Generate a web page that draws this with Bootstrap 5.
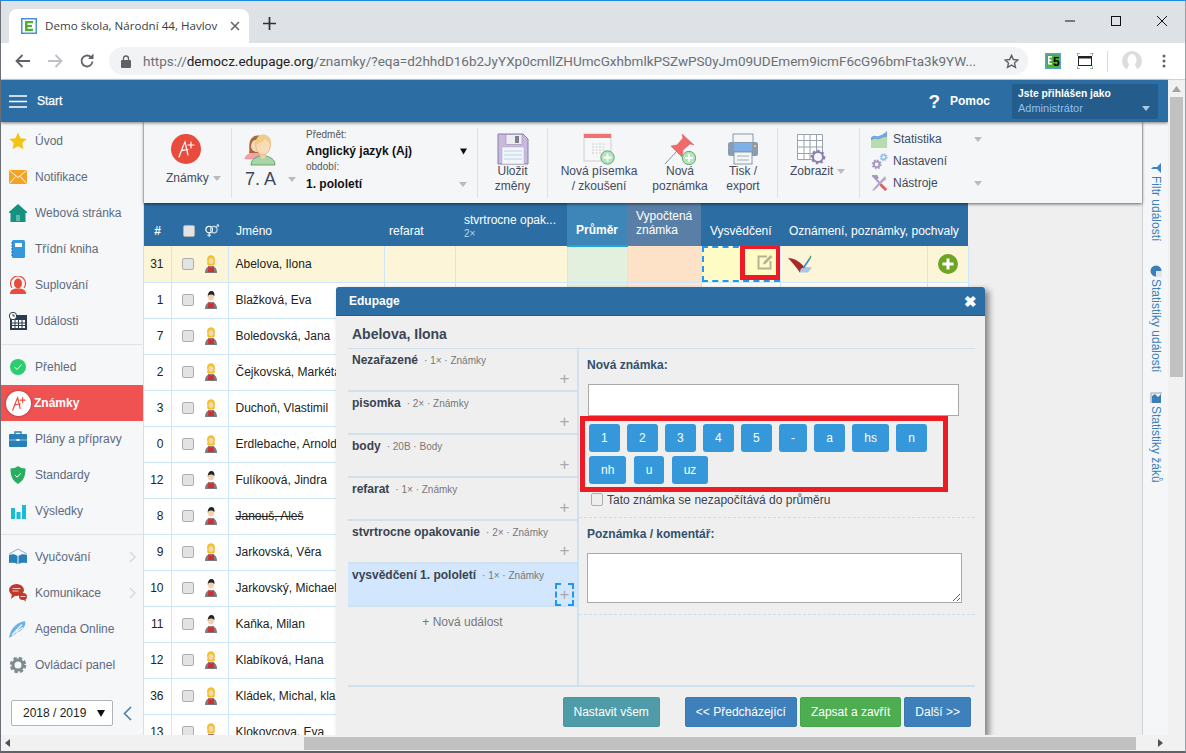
<!DOCTYPE html>
<html lang="cs">
<head>
<meta charset="utf-8">
<title>Edupage - Známky</title>
<link href="https://cdn.jsdelivr.net/npm/bootstrap@5.3.0/dist/css/bootstrap.min.css" rel="stylesheet">
<style>
html,body{height:100%;overflow:hidden}
body{font-family:"Liberation Sans",Arial,sans-serif;font-size:12px;color:#333;background:#efefef;position:relative}
.winframe{height:753px;border-top:1px solid #1a8ae0;border-left:1px solid #6b6f75;border-right:1px solid #9aa0a6;border-bottom:2px solid #5f6368;overflow:hidden}
.no-shrink{min-height:0;min-width:0}
/* browser chrome */
.cr-tabs{height:42px;background:#dee1e6;flex:none}
.cr-tab{width:240px;height:34px;margin:8px 0 0 8px;background:#fff;border-radius:8px 8px 0 0;padding:0 9px 0 12px;font-family:"Open Sans","Liberation Sans",sans-serif;font-size:11.6px;color:#3c4043;white-space:nowrap}
.cr-fav{width:16px;height:16px;flex:none;margin-right:8px}
.cr-tabx{margin-left:auto;flex:none}
.cr-plus{margin-left:14px;flex:none}
.cr-ctrl{margin-left:auto;gap:30px;padding-right:15px}
.cr-bar{height:37px;background:#fff;border-bottom:1px solid #d0d2d5;flex:none;padding-left:6px}
.cr-navic{width:32px;flex:none;display:flex;justify-content:center}
.cr-addr{width:919px;height:28px;margin-left:6px;border-radius:14px;background:#f1f3f4;padding:0 9px 0 12px;flex:none}
.cr-url{font-family:Roboto,"Liberation Sans",sans-serif;font-size:13.5px;color:#6c7075;white-space:nowrap;margin-left:12px}
.cr-url b{font-weight:400;color:#202124}
.cr-star{margin-left:auto;flex:none}
.cr-ext{margin-left:17px}
.cr-full{margin-left:16px}
.cr-sepv{width:1px;height:21px;background:#d8dadd;margin:0 14px}
.cr-menu{margin-left:20px}
/* header */
.hd-bar{height:42px;background:#2c6ea4;color:#fff;flex:none;padding-left:8px;box-shadow:0 1px 3px rgba(0,0,0,.5);z-index:3;position:relative}
.hd-start{font-size:12px;margin-left:10px;-webkit-text-stroke:.25px #fff}
.hd-q{font-size:19px;font-weight:700;margin-left:auto;line-height:1}
.hd-help{font-weight:700;margin:0 22px 0 10px}
.hd-user{width:146px;height:35px;background:#245c8c;border-radius:2px;margin-right:10px;padding:3px 6px;line-height:14px;position:relative}
.hd-user strong{font-size:10.3px;display:block}
.hd-user span{font-size:11px;color:#8fc0ec}
.hd-user i{position:absolute;right:8px;bottom:8px}
/* shared caret */
.tcaret{display:inline-block;width:0;height:0;border-left:4.5px solid transparent;border-right:4.5px solid transparent;border-top:5px solid #b9bbbe}
.hd-user .tcaret{border-top-color:#a9c9e4}
/* sidebar */
.sd-col{width:143px;flex:none;background:#f6f7f9;border-right:1px solid #dcdfe2;padding-top:1px}
.sd-item{height:36px;padding-left:8px;color:#5e6a80;position:relative;white-space:nowrap}
.sd-ic{width:18px;height:18px;flex:none;margin-right:8px}
.sd-item.is-on{background:#f05252;color:#fff;font-weight:700;padding-left:5px}
.sd-dot{width:25px;height:25px;border-radius:50%;background:#fff;flex:none;margin-right:3px;box-shadow:0 0 3px rgba(0,0,0,.35)}
.sd-rule{height:1px;background:#e0e2e5;margin:5px 0 4px}
.sd-chev{position:absolute;left:128px;top:12px}
.sd-foot{padding:17px 0 0 10px;gap:10px}
.yearsel{width:102px;height:26px;border-radius:2px;border:1px solid #b3b3b3;padding:0 0 0 11px;font-size:12px;color:#222;font-family:inherit;background-color:#fff;background-image:url("data:image/svg+xml,%3Csvg xmlns='http://www.w3.org/2000/svg' width='8' height='7'%3E%3Cpath d='M0 0h8L4 7z' fill='%23111'/%3E%3C/svg%3E");background-size:8px 7px;background-position:right 7px center}
/* toolbar */
.tb-wrap{height:81px;background:#f5f6f8;flex:none;box-shadow:0 1px 3px rgba(0,0,0,.6);position:relative;z-index:2;color:#3f4b5e}
.tb-grp{height:70px;margin-top:6px;border-right:1px solid #dfe1e4;flex:none}
.tb-btn{text-align:center;line-height:15px;padding-top:5px}
.tb-ic{width:32px;height:32px;display:block;margin:0 auto -1px}
.tb-g1{width:88px}.tb-g2{width:246px}.tb-g3{width:70px}.tb-g4{width:230px}.tb-g5{width:82px}
.tb-i1{width:102px}.tb-i2{width:60px}.tb-i3{width:66px}
.tb-aplus{width:30px;height:30px;margin:1px 0 7px 27px;display:block}
.tb-lab1{padding-left:22px;gap:4px}
.tb-lab5{padding-left:12px;gap:4px}
.tb-grid{width:30px;margin-left:18px}
.tb-pcol{width:74px;padding:4px 0 0 12px}
.tb-scol{padding-right:10px}
.tb-sub{font-size:10px;line-height:14px;color:#555}
.tb-strong{font-weight:700;color:#111;line-height:18px}
.tb-strong2{line-height:20px}
.tb-cls{font-size:18px;line-height:22px;color:#3c4859;gap:12px;margin:2px 0 0 1px;white-space:nowrap}
.tb-list{padding:6px 0 0 11px}
.tb-row{height:22px;width:111px}
.tb-row svg{margin-right:5px;flex:none}
.tb-row .tcaret{margin-left:auto}
/* grid */
.gr-area{flex:1 1 0;min-height:0;overflow:hidden;background:#efefef}
.gradetbl{width:824px;table-layout:fixed;margin:0;font-size:12px;border-collapse:collapse}
.cw1{width:27px}.cw2{width:57px}.cw3{width:156px}.cw4{width:71px}.cw5{width:112px}.cw6{width:60px}.cw7{width:74px}.cw8{width:79px}.cw9{width:147px}.cw10{width:41px}
.gradetbl th{background:#2c6ea4;color:#fff;font-weight:400;height:43px;padding:12px 0 0 8px;border:0;vertical-align:middle;line-height:14px;white-space:nowrap;overflow:hidden}
.gradetbl td{height:36px;padding:0 0 0 7px;border:1px solid #cfe7fa;border-width:0 1px 1px 0;background:#fff;vertical-align:middle;color:#222;white-space:nowrap;overflow:hidden}
.gradetbl tr.is-sel td{background:#fdf5d8}
.gradetbl td.c-num{text-align:right;padding:0 7px 0 0}
.gradetbl td.c-avg{background:#eaf3e6}
.gradetbl td.c-calc{background:#fdeadb}
.gradetbl tr.is-sel td.c-avg{background:#e2f0dd}
.gradetbl tr.is-sel td.c-calc{background:#fde2c8}
.gradetbl th.h-avg{background:#3f86b8;border-bottom:2px solid #1fa8cf;font-weight:700;padding:12px 0 0;text-align:center}
.gradetbl th.h-calc{background:#5a7fa6;padding:0 0 4px 9px}
.gradetbl th.h-num{padding:12px 0 0;font-weight:700;text-align:center}
.gradetbl th.h-chk{padding:12px 0 0 12px}
.gradetbl th.h-ref{padding-left:5px}
.gradetbl th.h-two{padding:3px 0 0 9px}
.gradetbl th.h-cert{padding-left:9px}
.gradetbl th.h-wide{padding-left:9px;overflow:visible}
.h-flex{gap:9px}
.h-sm{font-size:10px;color:#b9d4ea;display:block;line-height:13px}
.chk-box{width:12px;height:12px;background:#e3e3e3;border:1px solid #aeaeae;border-radius:2px;display:inline-block;flex:none}
.td-flex{gap:9px;padding-left:3px}
.gr-cert{position:relative;padding:0!important;background:#fefbc4!important}
.gr-dash{position:absolute;left:0;right:0;top:0;bottom:0;border:2px dashed #2196f3}
.gr-redbox{position:absolute;left:38px;top:-2px;width:41px;height:36px;border:5px solid #ed1c24;display:flex;align-items:center;justify-content:center;padding-left:9px}
.gradetbl td.c-addcell{padding:0 0 0 10px}
/* rail + scrollbars */
.rl-col{width:26px;flex:none;background:#f5f6f8;border-left:1px solid #cfd2d5;padding-top:40px;gap:19px;color:#3a7fb8;align-items:center}
.rl-link{writing-mode:vertical-rl;font-size:12px;line-height:14px;display:flex;align-items:center;gap:2px;white-space:nowrap}
.rl-second{margin-top:5px}
.vs-bar{width:17px;flex:none;background:#f1f1f1;padding:0 2px;position:relative;z-index:4}
.vs-up{height:17px;display:flex;align-items:center;justify-content:center}
.vs-thumb{height:280px;background:#c1c1c1}
.hs-bar{height:16px;flex:none;background:#f1f1f1;position:relative;z-index:6;padding-left:4px}
.hs-thumb{width:832px;height:13px;background:#c1c1c1;margin-left:293px}
.hs-right{margin:0 5px 0 auto}
/* dialog */
.dlg-box{position:absolute;left:336px;top:287px;width:649px;height:449px;background:#efefef;border-radius:3px 3px 0 0;box-shadow:4px 3px 6px rgba(0,0,0,.45);z-index:5;display:flex;flex-direction:column}
.dlg-head{height:29px;background:#2c6ea4;color:#fff;font-weight:700;padding:0 8px 0 13px;border-radius:3px 3px 0 0;border-bottom:1px solid #245c8c;flex:none}
.dlg-x{margin-left:auto;font-size:15px;line-height:1}
.dlg-name{height:33px;margin:0 10px 0 12px;padding:5px 0 0 4px;font-size:14px;font-weight:700;color:#3a4656;border-bottom:1px solid #cfe0ef;flex:none}
.dlg-main{margin:0 10px 0 12px;height:338px;border-bottom:2px solid #cfe0ef;flex:none}
.ev-col{width:231px;flex:none;border-right:2px solid #cfe0ef}
.ev-item{height:43px;border-bottom:2px solid #cfe0ef;padding:2px 3px 0 4px;position:relative}
.ev-item.is-on{background:#d2e7fd}
.ev-name{font-weight:700;color:#3a4350;line-height:14px}
.ev-meta{font-size:10px;color:#777;margin-left:6px}
.ev-plus{position:absolute;right:3px;bottom:-1px;width:19px;height:23px;color:#aaa;font-size:17px;line-height:21px;text-align:center}
.ev-item.is-on .ev-plus{border:2px dashed #2196f3;line-height:19px}
.ev-new{text-align:center;color:#777;padding-top:6px}
.nw-col{flex:1 1 0;min-width:0}
.nw-lbl{font-weight:700;color:#31506e;height:35px;padding:7px 0 0 8px}
.nw-input{width:371px;height:32px;display:block;margin-left:9px;background:#fff;border:1px solid #a9a9a9}
.grade-box{width:368px;border:5px solid #ed1c24;margin-left:1px;padding:3px 4px;gap:4px 7.3px;align-content:flex-start}
.btn.grade-btn{--bs-btn-padding-x:12px;--bs-btn-padding-y:0;--bs-btn-font-size:12px;--bs-btn-bg:#3498db;--bs-btn-border-color:#3498db;--bs-btn-color:#fff;--bs-btn-hover-bg:#3498db;--bs-btn-hover-color:#fff;--bs-btn-border-radius:3px;--bs-btn-border-width:0;height:28px;line-height:28px}
.nw-check{height:26px;padding:0 0 10px 12px;gap:4px;color:#3a4350;border-bottom:1px dashed #c6dff3}
.nw-check .chk-box{background:#eee;width:12px;height:13px}
.nw-note{height:35px;padding:7px 0 0 8px;font-weight:700;color:#31506e}
.nw-ta{width:375px;height:50px;display:block;margin-left:8px;background:#fff;border:1px solid #a9a9a9;border-radius:0;padding:0}
.nw-dash{margin-top:11px;border-bottom:1px dashed #c6dff3}
.dlg-foot{height:47px;padding:10px 14px 0 0;gap:3px;justify-content:flex-end;align-items:flex-start}
.btn.ft-btn{--bs-btn-padding-x:10px;--bs-btn-padding-y:0;--bs-btn-font-size:12px;--bs-btn-color:#fff;--bs-btn-border-radius:2px;--bs-btn-hover-color:#fff;height:30px;line-height:28px}
.ft-teal{--bs-btn-bg:#4f9ca8;--bs-btn-border-color:#4a95a0;--bs-btn-hover-bg:#4f9ca8;margin-right:22px}
.ft-blue{--bs-btn-bg:#3d80bc;--bs-btn-border-color:#3a7ab3;--bs-btn-hover-bg:#3d80bc}
.ft-green{--bs-btn-bg:#4cae50;--bs-btn-border-color:#48a54c;--bs-btn-hover-bg:#4cae50}
</style>
</head>
<body>
<svg width="0" height="0" class="position-absolute">
<defs>
<symbol id="i-aplus" viewBox="0 0 30 30"><circle cx="15" cy="15" r="15" fill="#e94b3c"/><path d="M8 23c2-5 4-11 6-15 1 4 2 9 3 13M10 17c2-1 5-1 7-1.500M20 8v6M17 11h6" fill="none" stroke="#fff" stroke-width="1.200" stroke-linecap="round"/></symbol>
<symbol id="i-aplus-r" viewBox="0 0 30 30"><path d="M8 23c2-5 4-11 6-15 1 4 2 9 3 13M10 17c2-1 5-1 7-1.500M20 8v6M17 11h6" fill="none" stroke="#e94b3c" stroke-width="1.400" stroke-linecap="round"/></symbol>
<symbol id="i-star" viewBox="0 0 18 18"><path d="M9 .5l2.600 5.700 6.200.7-4.600 4.200 1.300 6.100L9 14.200l-5.500 3 1.300-6.100L.2 6.900l6.200-.7z" fill="#f4c414"/></symbol>
<symbol id="i-mail" viewBox="0 0 18 15"><rect width="18" height="14" y=".5" fill="#f5a326"/><path d="M.5 1l8.500 7 8.500-7M.5 14l6-7M17.500 14l-6-7" fill="none" stroke="#fff" stroke-width="1"/></symbol>
<symbol id="i-home" viewBox="0 0 18 18"><path d="M9 0l9 8v1h-1.500v9h-15V9H0V8z" fill="#14917f"/><rect x="7" y="11" width="4" height="6" fill="#5cb8ab"/></symbol>
<symbol id="i-book" viewBox="0 0 18 18"><rect x="3" y="0" width="13" height="18" rx="1.500" fill="#3498db"/><rect x="6" y="3" width="7" height="4" fill="#fff"/><path d="M2 3h2M2 6h2M2 9h2M2 12h2M2 15h2" stroke="#1f6da8"/></symbol>
<symbol id="i-sub" viewBox="0 0 18 18"><path d="M3 12a7.500 7.500 0 1 1 12 0" fill="none" stroke="#e94b3c" stroke-width="1.200"/><ellipse cx="9" cy="7.500" rx="4" ry="5" fill="#e94b3c"/><path d="M1 18c0-4 3-5.500 8-5.500s8 1.500 8 5.500z" fill="#e94b3c"/></symbol>
<symbol id="i-cal" viewBox="0 0 18 18"><rect x="1" y="3" width="17" height="15" fill="#2b3c50"/><rect x="3" y="8" width="13" height="8" fill="#fff"/><path d="M6 8v8M9.500 8v8M13 8v8M3 11h13M3 13.500h13" stroke="#2b3c50" stroke-width="1"/><circle cx="4" cy="4" r="3.700" fill="#fff" stroke="#2b3c50"/><path d="M4 2v2h2" stroke="#2b3c50" fill="none"/></symbol>
<symbol id="i-ok" viewBox="0 0 18 18"><circle cx="9" cy="9" r="8" fill="#2ecc71"/><path d="M5.500 9l2.500 2.500 4.500-5" fill="none" stroke="#fff" stroke-width="1"/></symbol>
<symbol id="i-case" viewBox="0 0 18 18"><path d="M6 4V2h6v2" fill="none" stroke="#2980b9" stroke-width="1.300"/><rect y="4" width="18" height="13" rx="1" fill="#2980b9"/><path d="M0 10h18" stroke="#8ec4ea"/><rect x="7.500" y="9" width="3" height="2" fill="#fff"/></symbol>
<symbol id="i-shield" viewBox="0 0 18 18"><path d="M9 0c2.500 1.800 5 2.500 7.500 2.500 0 7-1.500 12-7.500 15.500C3 14.500 1.500 9.500 1.500 2.500 4 2.500 6.500 1.800 9 0z" fill="#27ae60"/><path d="M6 9l2.200 2.200L12 7" fill="none" stroke="#fff" stroke-width="1"/></symbol>
<symbol id="i-bars" viewBox="0 0 18 18"><path d="M2 6h4v11H2zM7.500 10h4v7h-4zM13 3h4v14h-4z" fill="#18bcd6"/></symbol>
<symbol id="i-learn" viewBox="0 0 18 18"><path d="M0 6l9-5 9 5" fill="none" stroke="#7fb3d9" stroke-width="1"/><path d="M0 7c3-1 6-1 8.500 1v8C6 14.500 3 14.500 0 15zM18 7c-3-1-6-1-8.500 1v8c2.500-1.500 5.500-1.500 8.500-1z" fill="#2a7fb8"/></symbol>
<symbol id="i-chat" viewBox="0 0 18 18"><ellipse cx="14" cy="12.500" rx="4" ry="3.500" fill="#c0392b"/><path d="M14 15l3 3-1-4z" fill="#c0392b"/><ellipse cx="7.500" cy="6" rx="7.500" ry="6" fill="#c0392b"/><path d="M3 10l-1 5 5-4z" fill="#c0392b"/><path d="M3.500 4.500h8M3.500 7h6" stroke="#f4c7c1"/><path d="M11.500 12.500h5" stroke="#f4c7c1"/></symbol>
<symbol id="i-pen" viewBox="0 0 18 18"><path d="M0 18C1 11 5 3 16 1c1.500 5-3 10-8 11.500C5 14.500 3 16.500 0 18z" fill="#6db3e8"/><path d="M3 15L13 4.500M6.500 12.500l7.500-5" stroke="#f6f7f9" stroke-width="1.200" fill="none"/></symbol>
<symbol id="i-gear" viewBox="0 0 18 18"><circle cx="9" cy="9" r="6.500" fill="none" stroke="#7f8c8d" stroke-width="3.500" stroke-dasharray="3.100 2"/><circle cx="9" cy="9" r="5" fill="none" stroke="#7f8c8d" stroke-width="3"/></symbol>
<symbol id="i-people" viewBox="0 0 32 34"><path d="M13 20c-3 0-12 2-12 7h17v-7z" fill="#f3a0aa" stroke="#d87f8c" stroke-width=".5"/><path d="M5 21c1-3-1-12 3-15 3-4 11-3 12 2l-4 13z" fill="#a9663c"/><path d="M7 15c0-5 3-8 7-7v12c-3 0-6-1-7-5z" fill="#fcd9b6"/><path d="M7 33c0-6 5-8 9-9h6c4 1 9 3 9 9z" fill="#a9d5a5" stroke="#4e9a58" stroke-width=".8"/><path d="M16 24c1 2 2 3 3 3s2-1 3-3v-4h-6z" fill="#f8cfa6"/><path d="M12 16c-1-7 1-13 7-13s9 5 7 13c-1 4-4 7-7 7s-6-3-7-7z" fill="#fbdcb8" stroke="#e0b073" stroke-width=".8"/><path d="M12 13c0-6 2-10 7-10s8 4 7 10c-2-3-3-5-5-6-1 3-6 4-9 6z" fill="#efcd87"/></symbol>
<symbol id="i-floppy" viewBox="0 0 32 32"><path d="M1 1h25l5 5v25H1z" fill="#c8b9dd" stroke="#8e7dab"/><rect x="9" y="1.500" width="16" height="10" fill="#ececf1" stroke="#8e7dab" stroke-width=".5"/><rect x="18" y="3" width="4" height="7" fill="#7a7f8a"/><rect x="5" y="14" width="22" height="17" fill="#f2f5f9" stroke="#a5b4c6" stroke-width=".5"/><path d="M7 18h18M7 22h18M7 26h18" stroke="#b6d2e8"/></symbol>
<symbol id="i-exam" viewBox="0 0 32 32"><rect x="1" y="1" width="27" height="27" fill="#f7f7f7" stroke="#cfcfcf"/><rect x="1" y="1" width="27" height="4" fill="#ef7373"/><path d="M9 11h14M9 14h14M9 17h14M9 20h14" stroke="#c8ccd0" stroke-dasharray="2 1.500"/><circle cx="24.500" cy="24.500" r="6.700" fill="#b5e3bd" stroke="#5fae72"/><path d="M24.500 20.500v8M20.500 24.500h8" stroke="#fff" stroke-width="1.800"/></symbol>
<symbol id="i-pin" viewBox="0 0 32 32"><path d="M1 31L13 18" stroke="#7d93b0"/><path d="M7 13l6-1 6-7-1-4 12 11-4-1-7 6-1 7z" fill="#ef6b6b" stroke="#d64d4d" stroke-width=".5"/><circle cx="25" cy="25" r="6.700" fill="#b5e3bd" stroke="#5fae72"/><path d="M25 21v8M21 25h8" stroke="#fff" stroke-width="1.800"/></symbol>
<symbol id="i-print" viewBox="0 0 32 32"><rect x="6" y="1" width="20" height="10" fill="#f4f5f7" stroke="#8a96a5"/><rect x="1" y="9" width="30" height="14" rx="2.500" fill="#8b9bb0"/><rect x="7" y="10" width="18" height="8" fill="#7eb0e8"/><rect x="27" y="12" width="2" height="2" fill="#f4d03f"/><rect x="7" y="19" width="18" height="12" fill="#f4f5f7" stroke="#8a96a5"/><path d="M10 23h12M10 27h12" stroke="#a4aeba"/></symbol>
<symbol id="i-grid" viewBox="0 0 30 32"><path d="M1.500 1.500h25v25h-25zM1.500 7.500h25M1.500 14h25M1.500 20.500h25M8 1.500v25M14 1.500v25M20.500 1.500v25" fill="#fff" stroke="#9aa3ad"/><circle cx="22" cy="24" r="5" fill="#f5f6f8" stroke="#8e7dab" stroke-width="2"/><circle cx="22" cy="24" r="6.300" fill="none" stroke="#8e7dab" stroke-width="2" stroke-dasharray="2.400 2.300"/></symbol>
<symbol id="i-stat" viewBox="0 0 18 18"><path d="M0 7c4-4 5 0 9-2 3-1 5-2 8-5v11H0z" fill="#6fa8dc"/><path d="M0 10c4-3 8 0 10-2 3-2 5-1 7-2v12H0z" fill="#b7dcae"/></symbol>
<symbol id="i-set" viewBox="0 0 18 18"><circle cx="6" cy="12" r="3" fill="none" stroke="#a796c2" stroke-width="2"/><circle cx="6" cy="12" r="4.500" fill="none" stroke="#a796c2" stroke-width="1.500" stroke-dasharray="1.800 1.700"/><circle cx="13.500" cy="4.500" r="2.300" fill="none" stroke="#8dbfe6" stroke-width="1.500"/><circle cx="13.500" cy="4.500" r="3.600" fill="none" stroke="#8dbfe6" stroke-width="1.200" stroke-dasharray="1.500 1.300"/></symbol>
<symbol id="i-tools" viewBox="0 0 18 18"><path d="M2 1l3 3 2-1-1-2c-2-1-4-1-4 0zM3 2L16 16" stroke="#a796c2" stroke-width="2" fill="#a796c2"/><path d="M15 1l-4 4-8 9-2 3 3-1 9-9 4-3-1 1z" fill="#b6a8cd"/><path d="M10 10l6 6" stroke="#e85c5c" stroke-width="3"/></symbol>
<symbol id="i-f" viewBox="0 0 16 18"><path d="M2 18c0-4 2-7 6-7s6 3 6 7z" fill="#7b7b7b"/><path d="M5.500 10.500L8 13l2.500-2.500.5 6.500H5z" fill="#d22e35"/><ellipse cx="8" cy="4.800" rx="4" ry="4.600" fill="#efc327"/><path d="M4 9c0-1 .5-2 1.500-2.500h5C11.500 7 12 8 12 9l-1.500 1.500h-5z" fill="#efc327"/><ellipse cx="8" cy="6" rx="2.400" ry="3" fill="#f9d5b0"/></symbol>
<symbol id="i-m" viewBox="0 0 16 18"><path d="M2 18c0-4 2-7 6-7s6 3 6 7z" fill="#7b7b7b"/><path d="M5.500 10.500L8 13l2.500-2.500.5 6.500H5z" fill="#d22e35"/><ellipse cx="8" cy="5.800" rx="3" ry="3.800" fill="#f5cfae"/><path d="M4.700 5.500c0-3.500 1.600-5.500 3.800-5.500s3.200 2 3 5c-1-1.500-4-2-6-1-.2 1-.5 1.500-.8 1.500z" fill="#222"/></symbol>
<symbol id="i-mem" viewBox="0 0 16 16"><circle cx="5.500" cy="7" r="3.500" fill="none" stroke="#fff" stroke-width="1.300"/><circle cx="10.500" cy="7" r="3.500" fill="none" stroke="#b9d7f0" stroke-width="1.300"/><path d="M5.500 10.500V15M3.500 13h4M13 4.500l2-2M13.500 2h2v2" fill="none" stroke="#fff" stroke-width="1"/></symbol>
<symbol id="i-edit" viewBox="0 0 16 16"><path d="M10 2.500H1.500v12h12V7" fill="none" stroke="#b5b29a" stroke-width="2"/><path d="M6 10.500l.7-2.800L13.500 1l2 2-6.800 6.800z" fill="#b5b29a"/></symbol>
<symbol id="i-note" viewBox="0 0 26 18"><path d="M11 17.500l2.500-6 10.500 1-4 5z" fill="#a9c5e8"/><path d="M0 3c6 0 13 4 17 10-3-1-5 1-5 4.500C8 12 4 7 0 3z" fill="#a52a2a"/><path d="M15 12l6-9 1.500 1-6 9z" fill="#4a90c8"/><path d="M21 3l1.500-2.500 1 .8L22.500 4z" fill="#55a35a"/></symbol>
<symbol id="i-add" viewBox="0 0 20 20"><circle cx="10" cy="10" r="10" fill="#6ea324"/><path d="M10 4.500v11M4.500 10h11" stroke="#fff" stroke-width="3"/></symbol>
<symbol id="i-chev" viewBox="0 0 7 12"><path d="M1 1l5 5-5 5" fill="none" stroke="#d4d6d9" stroke-width="1.300"/></symbol>
</defs>
</svg>

<div class="winframe d-flex flex-column">
  <div class="cr-tabs d-flex align-items-start">
    <div class="cr-tab d-flex align-items-center">
      <svg class="cr-fav" viewBox="0 0 16 16"><rect width="16" height="16" fill="#4a90d9"/><rect x="1.500" y="1.500" width="13" height="13" fill="#fff"/><path d="M4 3h8v2.300H6.500v1.600H11v2.200H6.500v1.600H12V13H4z" fill="#4cb02e"/></svg>
      <span>Demo škola, Národní 44, Havlov</span>
      <svg class="cr-tabx" width="10" height="10" viewBox="0 0 10 10"><path d="M1 1l8 8M9 1l-8 8" stroke="#5f6368" stroke-width="1.500"/></svg>
    </div>
    <svg class="cr-plus mt-3" width="13" height="13" viewBox="0 0 13 13"><path d="M6.500 0v13M0 6.500h13" stroke="#303134" stroke-width="1.700"/></svg>
    <div class="cr-ctrl d-flex mt-2 pt-1 align-items-center">
      <svg width="16" height="16" viewBox="0 0 16 16"><path d="M3 8h10" stroke="#111"/></svg>
      <svg width="16" height="16" viewBox="0 0 16 16"><rect x="3.500" y="3.500" width="9" height="9" fill="none" stroke="#111"/></svg>
      <svg width="16" height="16" viewBox="0 0 16 16"><path d="M3 3l10 10M13 3L3 13" stroke="#111"/></svg>
    </div>
  </div>
  <div class="cr-bar d-flex align-items-center">
    <span class="cr-navic"><svg width="16" height="14" viewBox="0 0 16 14"><path d="M15 7H2M7.500 1L1.500 7l6 6" fill="none" stroke="#5f6368" stroke-width="1.800"/></svg></span>
    <span class="cr-navic"><svg width="16" height="14" viewBox="0 0 16 14"><path d="M1 7h13M8.500 1l6 6-6 6" fill="none" stroke="#bdc1c6" stroke-width="1.800"/></svg></span>
    <span class="cr-navic"><svg width="16" height="16" viewBox="0 0 16 16"><path d="M13.500 8.500A5.500 5.500 0 1 1 11.800 4" fill="none" stroke="#5f6368" stroke-width="1.800"/><path d="M9 6h5.500V.500z" fill="#5f6368"/></svg></span>
    <div class="cr-addr d-flex align-items-center">
      <svg width="10" height="13" viewBox="0 0 10 13"><rect y="5" width="10" height="8" rx="1" fill="#5f6368"/><path d="M2.500 5V3.500a2.500 2.500 0 0 1 5 0V5" fill="none" stroke="#5f6368" stroke-width="1.300"/></svg>
      <span class="cr-url">https://<b>democz.edupage.org</b>/znamky/?eqa=d2hhdD16b2JyYXp0cmllZHUmcGxhbmlkPSZwPS0yJm09UDEmem9icmF6cG96bmFta3k9YW...</span>
      <svg class="cr-star" width="15" height="15" viewBox="0 0 16 16"><path d="M8 1.500l2 4.400 4.800.5-3.600 3.200 1 4.700L8 11.900l-4.200 2.400 1-4.700L1.200 6.400 6 5.900z" fill="none" stroke="#5f6368" stroke-width="1.500"/></svg>
    </div>
    <div class="cr-ext d-flex align-items-center">
      <svg width="16" height="16" viewBox="0 0 16 16"><rect width="16" height="16" fill="#5aa0dc"/><rect x="1.500" y="1.500" width="13" height="13" fill="#4cb02e"/><text x="8" y="13" font-size="12" font-weight="700" font-family="Liberation Sans" fill="#000">5</text><path d="M3 3h4v1.500H4.500v2H6.500V8H4.500v2H7v1.500H3z" fill="#fff"/></svg>
      <svg class="cr-full" width="16" height="16" viewBox="0 0 16 16"><rect x="1.500" y="3.500" width="13" height="9" fill="none" stroke="#222"/><path d="M1.500 3.500h13v2h-13z" fill="#222"/><path d="M0 3V0h3M13 0h3v3M0 13v3h3M13 16h3v-3" fill="none" stroke="#2b8a3e"/></svg>
      <span class="cr-sepv"></span>
      <svg width="20" height="20" viewBox="0 0 20 20"><circle cx="10" cy="10" r="10" fill="#dcdcdc"/><ellipse cx="10" cy="9" rx="4.500" ry="6" fill="#fff"/><path d="M5 20c0-4 2-7 5-7s5 3 5 7z" fill="#fff"/></svg>
      <svg class="cr-menu" width="4" height="14" viewBox="0 0 4 14"><circle cx="2" cy="2" r="1.500" fill="#5f6368"/><circle cx="2" cy="7" r="1.500" fill="#5f6368"/><circle cx="2" cy="12" r="1.500" fill="#5f6368"/></svg>
    </div>
  </div>

  <div class="d-flex flex-grow-1 no-shrink">
    <div class="d-flex flex-column flex-grow-1 no-shrink">
      <div class="hd-bar d-flex align-items-center">
        <svg width="18" height="13" viewBox="0 0 18 13"><path d="M0 1h18M0 6.500h18M0 12h18" stroke="#fff" stroke-width="1.500"/></svg>
        <span class="hd-start">Start</span>
        <span class="hd-q">?</span>
        <span class="hd-help">Pomoc</span>
        <div class="hd-user"><strong>Jste přihlášen jako</strong><span>Administrátor</span><i class="tcaret"></i></div>
      </div>

      <div class="d-flex flex-grow-1 no-shrink">
        <aside class="sd-col">
          <div class="sd-item d-flex align-items-center"><svg class="sd-ic"><use href="#i-star"/></svg>Úvod</div>
          <div class="sd-item d-flex align-items-center"><svg class="sd-ic"><use href="#i-mail"/></svg>Notifikace</div>
          <div class="sd-item d-flex align-items-center"><svg class="sd-ic"><use href="#i-home"/></svg>Webová stránka</div>
          <div class="sd-item d-flex align-items-center"><svg class="sd-ic"><use href="#i-book"/></svg>Třídní kniha</div>
          <div class="sd-item d-flex align-items-center"><svg class="sd-ic"><use href="#i-sub"/></svg>Suplování</div>
          <div class="sd-item d-flex align-items-center"><svg class="sd-ic"><use href="#i-cal"/></svg>Události</div>
          <div class="sd-rule"></div>
          <div class="sd-item d-flex align-items-center"><svg class="sd-ic"><use href="#i-ok"/></svg>Přehled</div>
          <div class="sd-item is-on d-flex align-items-center"><svg class="sd-dot"><use href="#i-aplus-r"/></svg>Známky</div>
          <div class="sd-item d-flex align-items-center"><svg class="sd-ic"><use href="#i-case"/></svg>Plány a přípravy</div>
          <div class="sd-item d-flex align-items-center"><svg class="sd-ic"><use href="#i-shield"/></svg>Standardy</div>
          <div class="sd-item d-flex align-items-center"><svg class="sd-ic"><use href="#i-bars"/></svg>Výsledky</div>
          <div class="sd-rule"></div>
          <div class="sd-item d-flex align-items-center"><svg class="sd-ic"><use href="#i-learn"/></svg>Vyučování<svg class="sd-chev" width="7" height="12"><use href="#i-chev"/></svg></div>
          <div class="sd-item d-flex align-items-center"><svg class="sd-ic"><use href="#i-chat"/></svg>Komunikace<svg class="sd-chev" width="7" height="12"><use href="#i-chev"/></svg></div>
          <div class="sd-item d-flex align-items-center"><svg class="sd-ic"><use href="#i-pen"/></svg>Agenda Online</div>
          <div class="sd-item d-flex align-items-center"><svg class="sd-ic"><use href="#i-gear"/></svg>Ovládací panel</div>
          <div class="sd-foot d-flex align-items-center">
            <select class="form-select yearsel" aria-label="Školní rok"><option>2018 / 2019</option></select>
            <svg width="9" height="15" viewBox="0 0 9 15"><path d="M8 1L1.500 7.500 8 14" fill="none" stroke="#4a7fa8" stroke-width="1.600"/></svg>
          </div>
        </aside>

        <main class="d-flex flex-column flex-grow-1 no-shrink">
          <div class="tb-wrap d-flex">
            <div class="tb-grp tb-btn tb-g1">
              <svg class="tb-aplus"><use href="#i-aplus"/></svg>
              <div class="d-flex align-items-center tb-lab1">Známky<i class="tcaret"></i></div>
            </div>
            <div class="tb-grp d-flex tb-g2">
              <div class="tb-pcol">
                <svg width="32" height="34"><use href="#i-people"/></svg>
                <div class="tb-cls d-flex align-items-center">7. A<i class="tcaret"></i></div>
              </div>
              <div class="flex-grow-1 tb-scol">
                <div class="tb-sub">Předmět:</div>
                <div class="tb-strong d-flex justify-content-between align-items-center">Anglický jazyk (Aj)<svg width="7" height="7" viewBox="0 0 8 7"><path d="M0 0h8L4 7z" fill="#111"/></svg></div>
                <div class="tb-sub">období:</div>
                <div class="tb-strong tb-strong2 d-flex justify-content-between align-items-center">1. pololetí<i class="tcaret"></i></div>
              </div>
            </div>
            <div class="tb-grp tb-btn tb-g3"><svg class="tb-ic"><use href="#i-floppy"/></svg>Uložit<br>změny</div>
            <div class="tb-grp d-flex tb-g4">
              <div class="tb-btn tb-i1"><svg class="tb-ic"><use href="#i-exam"/></svg>Nová písemka<br>/ zkoušení</div>
              <div class="tb-btn tb-i2"><svg class="tb-ic"><use href="#i-pin"/></svg>Nová<br>poznámka</div>
              <div class="tb-btn tb-i3"><svg class="tb-ic"><use href="#i-print"/></svg>Tisk /<br>export</div>
            </div>
            <div class="tb-grp tb-btn tb-g5">
              <svg class="tb-ic tb-grid"><use href="#i-grid"/></svg>
              <div class="d-flex align-items-center tb-lab5">Zobrazit<i class="tcaret"></i></div>
            </div>
            <div class="d-flex flex-column tb-list">
              <div class="tb-row d-flex align-items-center"><svg width="17" height="17"><use href="#i-stat"/></svg>Statistika<i class="tcaret"></i></div>
              <div class="tb-row d-flex align-items-center"><svg width="17" height="17"><use href="#i-set"/></svg>Nastavení</div>
              <div class="tb-row d-flex align-items-center"><svg width="17" height="17"><use href="#i-tools"/></svg>Nástroje<i class="tcaret"></i></div>
            </div>
          </div>

          <div class="gr-area">
            <table class="table gradetbl">
              <colgroup><col class="cw1"><col class="cw2"><col class="cw3"><col class="cw4"><col class="cw5"><col class="cw6"><col class="cw7"><col class="cw8"><col class="cw9"><col class="cw10"></colgroup>
              <thead><tr>
                <th class="h-num">#</th>
                <th class="h-chk"><div class="d-flex align-items-center h-flex"><span class="chk-box"></span><svg width="15" height="15"><use href="#i-mem"/></svg></div></th>
                <th>Jméno</th>
                <th class="h-ref">refarat</th>
                <th class="h-two"><span>stvrtrocne opak...</span><span class="h-sm">2×</span></th>
                <th class="h-avg">Průměr</th>
                <th class="h-calc">Vypočtená<br>známka</th>
                <th class="h-cert">Vysvědčení</th>
                <th class="h-wide">Oznámení, poznámky, pochvaly</th>
                <th></th>
              </tr></thead>
              <tbody>
                <tr class="is-sel"><td class="c-num">31</td><td><div class="d-flex align-items-center td-flex"><span class="chk-box"></span><svg width="16" height="18"><use href="#i-f"/></svg></div></td><td>Abelova, Ilona</td><td></td><td></td><td class="c-avg"></td><td class="c-calc"></td>
                  <td class="gr-cert"><div class="gr-dash"></div><div class="gr-redbox"><svg width="16" height="16"><use href="#i-edit"/></svg></div></td>
                  <td><svg width="26" height="18"><use href="#i-note"/></svg></td><td class="c-addcell"><svg width="20" height="20" class="d-block"><use href="#i-add"/></svg></td></tr>
                <tr><td class="c-num">1</td><td><div class="d-flex align-items-center td-flex"><span class="chk-box"></span><svg width="16" height="18"><use href="#i-m"/></svg></div></td><td>Blažková, Eva</td><td></td><td></td><td class="c-avg"></td><td class="c-calc"></td><td></td><td></td><td></td></tr>
                <tr><td class="c-num">7</td><td><div class="d-flex align-items-center td-flex"><span class="chk-box"></span><svg width="16" height="18"><use href="#i-f"/></svg></div></td><td>Boledovská, Jana</td><td></td><td></td><td class="c-avg"></td><td class="c-calc"></td><td></td><td></td><td></td></tr>
                <tr><td class="c-num">2</td><td><div class="d-flex align-items-center td-flex"><span class="chk-box"></span><svg width="16" height="18"><use href="#i-f"/></svg></div></td><td>Čejkovská, Markéta</td><td></td><td></td><td class="c-avg"></td><td class="c-calc"></td><td></td><td></td><td></td></tr>
                <tr><td class="c-num">3</td><td><div class="d-flex align-items-center td-flex"><span class="chk-box"></span><svg width="16" height="18"><use href="#i-f"/></svg></div></td><td>Duchoň, Vlastimil</td><td></td><td></td><td class="c-avg"></td><td class="c-calc"></td><td></td><td></td><td></td></tr>
                <tr><td class="c-num">0</td><td><div class="d-flex align-items-center td-flex"><span class="chk-box"></span><svg width="16" height="18"><use href="#i-f"/></svg></div></td><td>Erdlebache, Arnold</td><td></td><td></td><td class="c-avg"></td><td class="c-calc"></td><td></td><td></td><td></td></tr>
                <tr><td class="c-num">12</td><td><div class="d-flex align-items-center td-flex"><span class="chk-box"></span><svg width="16" height="18"><use href="#i-m"/></svg></div></td><td>Fulíkoová, Jindra</td><td></td><td></td><td class="c-avg"></td><td class="c-calc"></td><td></td><td></td><td></td></tr>
                <tr><td class="c-num">8</td><td><div class="d-flex align-items-center td-flex"><span class="chk-box"></span><svg width="16" height="18"><use href="#i-m"/></svg></div></td><td><s>Janouš, Aleš</s></td><td></td><td></td><td class="c-avg"></td><td class="c-calc"></td><td></td><td></td><td></td></tr>
                <tr><td class="c-num">9</td><td><div class="d-flex align-items-center td-flex"><span class="chk-box"></span><svg width="16" height="18"><use href="#i-f"/></svg></div></td><td>Jarkovská, Věra</td><td></td><td></td><td class="c-avg"></td><td class="c-calc"></td><td></td><td></td><td></td></tr>
                <tr><td class="c-num">10</td><td><div class="d-flex align-items-center td-flex"><span class="chk-box"></span><svg width="16" height="18"><use href="#i-m"/></svg></div></td><td>Jarkovský, Michael</td><td></td><td></td><td class="c-avg"></td><td class="c-calc"></td><td></td><td></td><td></td></tr>
                <tr><td class="c-num">11</td><td><div class="d-flex align-items-center td-flex"><span class="chk-box"></span><svg width="16" height="18"><use href="#i-m"/></svg></div></td><td>Kaňka, Milan</td><td></td><td></td><td class="c-avg"></td><td class="c-calc"></td><td></td><td></td><td></td></tr>
                <tr><td class="c-num">12</td><td><div class="d-flex align-items-center td-flex"><span class="chk-box"></span><svg width="16" height="18"><use href="#i-f"/></svg></div></td><td>Klabíková, Hana</td><td></td><td></td><td class="c-avg"></td><td class="c-calc"></td><td></td><td></td><td></td></tr>
                <tr><td class="c-num">36</td><td><div class="d-flex align-items-center td-flex"><span class="chk-box"></span><svg width="16" height="18"><use href="#i-f"/></svg></div></td><td>Kládek, Michal, kla</td><td></td><td></td><td class="c-avg"></td><td class="c-calc"></td><td></td><td></td><td></td></tr>
                <tr><td class="c-num">13</td><td><div class="d-flex align-items-center td-flex"><span class="chk-box"></span><svg width="16" height="18"><use href="#i-f"/></svg></div></td><td>Klokovcova, Eva</td><td></td><td></td><td class="c-avg"></td><td class="c-calc"></td><td></td><td></td><td></td></tr>
              </tbody>
            </table>
          </div>
        </main>

        <aside class="rl-col d-flex flex-column">
          <div class="rl-link"><svg width="12" height="12" viewBox="0 0 12 12"><path d="M1 1l10 0-4 4v6l-2-2V5z" fill="#3a86c8" transform="rotate(90 6 6)"/></svg>Filtr událostí</div>
          <div class="rl-link rl-second"><svg width="12" height="12" viewBox="0 0 12 12"><circle cx="6" cy="6" r="5.500" fill="#3a7fb8"/><path d="M6 6h6v6H6z" fill="#dfe7ee"/></svg>Statistiky událostí</div>
          <div class="rl-link"><svg width="12" height="12" viewBox="0 0 12 12"><path d="M1 1h11M1 1v10" stroke="#9aa0a6" fill="none"/><path d="M2 11V4l3-2 3 3 3-3v9z" fill="#3a7fb8"/></svg>Statistiky žáků</div>
        </aside>
      </div>

      <div class="hs-bar d-flex align-items-center">
        <svg width="6" height="8" viewBox="0 0 6 8"><path d="M5 0v8L0 4z" fill="#505050"/></svg>
        <div class="hs-thumb"></div>
        <svg class="hs-right" width="6" height="8" viewBox="0 0 6 8"><path d="M1 0v8l5-4z" fill="#505050"/></svg>
      </div>
    </div>
    <div class="vs-bar">
      <div class="vs-up"><svg width="9" height="6" viewBox="0 0 9 6"><path d="M0 6h9L4.500 0z" fill="#a3a3a3"/></svg></div>
      <div class="vs-thumb"></div>
    </div>
  </div>
</div>

<div class="dlg-box">
  <div class="dlg-head d-flex align-items-center">Edupage<span class="dlg-x">✖</span></div>
  <div class="dlg-name d-flex align-items-center">Abelova, Ilona</div>
  <div class="dlg-main d-flex">
    <div class="ev-col">
      <div class="ev-item"><span class="ev-name">Nezařazené</span><span class="ev-meta">· 1× · Známky</span><span class="ev-plus">+</span></div>
      <div class="ev-item"><span class="ev-name">pisomka</span><span class="ev-meta">· 2× · Známky</span><span class="ev-plus">+</span></div>
      <div class="ev-item"><span class="ev-name">body</span><span class="ev-meta">· 20B · Body</span><span class="ev-plus">+</span></div>
      <div class="ev-item"><span class="ev-name">refarat</span><span class="ev-meta">· 1× · Známky</span><span class="ev-plus">+</span></div>
      <div class="ev-item"><span class="ev-name">stvrtrocne opakovanie</span><span class="ev-meta">· 2× · Známky</span><span class="ev-plus">+</span></div>
      <div class="ev-item is-on"><span class="ev-name">vysvědčení 1. pololetí</span><span class="ev-meta">· 1× · Známky</span><span class="ev-plus">+</span></div>
      <div class="ev-new">+ Nová událost</div>
    </div>
    <div class="nw-col">
      <div class="nw-lbl">Nová známka:</div>
      <input class="nw-input" type="text" aria-label="Nová známka">
      <div class="grade-box d-flex flex-wrap">
        <button class="btn grade-btn">1</button><button class="btn grade-btn">2</button><button class="btn grade-btn">3</button><button class="btn grade-btn">4</button><button class="btn grade-btn">5</button><button class="btn grade-btn">-</button><button class="btn grade-btn">a</button><button class="btn grade-btn">hs</button><button class="btn grade-btn">n</button><button class="btn grade-btn">nh</button><button class="btn grade-btn">u</button><button class="btn grade-btn">uz</button>
      </div>
      <div class="nw-check d-flex align-items-center"><span class="chk-box"></span>Tato známka se nezapočítává do průměru</div>
      <div class="nw-note">Poznámka / komentář:</div>
      <textarea class="nw-ta" aria-label="Poznámka"></textarea>
      <div class="nw-dash"></div>
    </div>
  </div>
  <div class="dlg-foot d-flex">
    <button class="btn ft-btn ft-teal">Nastavit všem</button>
    <button class="btn ft-btn ft-blue">&lt;&lt; Předcházející</button>
    <button class="btn ft-btn ft-green">Zapsat a zavřít</button>
    <button class="btn ft-btn ft-blue">Další &gt;&gt;</button>
  </div>
</div>
<script src="https://cdn.jsdelivr.net/npm/bootstrap@5.3.0/dist/js/bootstrap.bundle.min.js"></script>
</body>
</html>
